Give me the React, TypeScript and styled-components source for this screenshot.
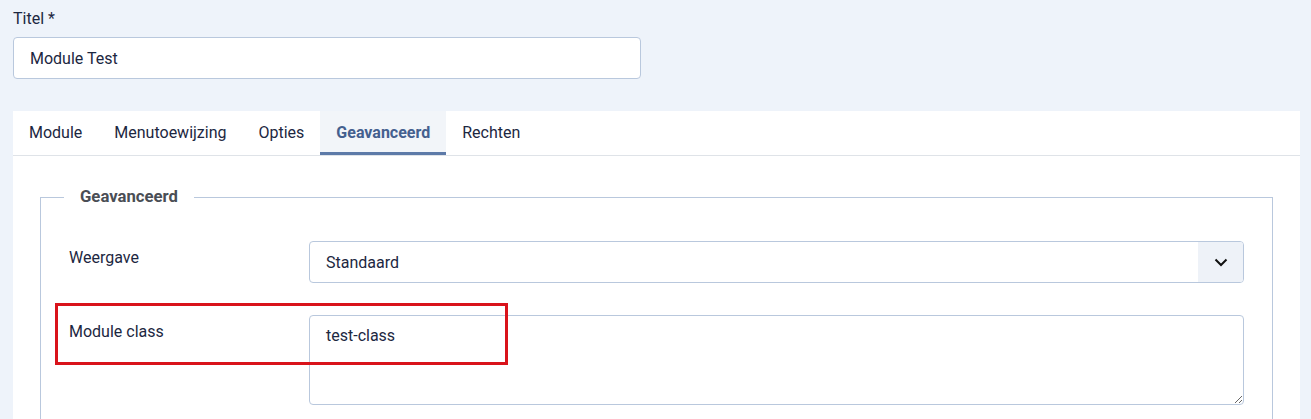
import styled, { createGlobalStyle } from "styled-components"

const GlobalStyle = createGlobalStyle`
    body {
        margin: 0;
        background-color: #eef3fa;
        font-family: Roboto, "Liberation Sans", sans-serif;
        font-size: 16px;
        color: #1c2741;
    }
`

const Page = styled.div`
    padding: 7px 11px 0 13px;
    height: 419px;
    box-sizing: border-box;
    overflow: hidden;
`

const TopLabel = styled.label`
    display: block;
    line-height: 24px;
    margin-bottom: 6px;
`

const TextInput = styled.input`
    display: block;
    box-sizing: border-box;
    width: 628px;
    height: 42px;
    padding: 0 16px;
    border: 1px solid #b9c8dd;
    border-radius: 4px;
    background: #fff;
    font-family: inherit;
    font-size: 16px;
    color: #1c2741;
    outline: none;
`

const Card = styled.div`
    margin-top: 32px;
    background: #fff;
`

const TabBar = styled.div`
    display: flex;
    border-bottom: 1px solid #dfe3e8;
`

const Tab = styled.div<{ $active?: boolean }>`
    box-sizing: border-box;
    height: 44px;
    padding: 1px 16px 0;
    display: flex;
    align-items: center;
    font-weight: ${p => (p.$active ? 700 : 400)};
    color: ${p => (p.$active ? "#44608f" : "#1c2741")};
    background: ${p => (p.$active ? "#f2f5f9" : "transparent")};
    border-bottom: 3px solid ${p => (p.$active ? "#5d7aa8" : "transparent")};
`

const CardBody = styled.div`
    padding: 29px 27px 30px;
`

const Fieldset = styled.fieldset`
    position: relative;
    margin: 0;
    padding: 32px 28px 30px;
    border: 1px solid #b9c8dd;
`

const Legend = styled.legend`
    margin-left: -5px;
    padding: 0 16px;
    font-weight: 700;
    font-size: 16.7px;
    line-height: 24px;
    color: #4a4e55;
`

const Row = styled.div`
    display: grid;
    grid-template-columns: 240px 1fr;
    margin-bottom: 32px;
`

const RowLabel = styled.label`
    padding-top: 5px;
    line-height: 24px;
`

const SelectBox = styled.div`
    display: flex;
    height: 42px;
    box-sizing: border-box;
    border: 1px solid #b9c8dd;
    border-radius: 4px;
    overflow: hidden;
`

const SelectValue = styled.div`
    flex: 1;
    display: flex;
    align-items: center;
    padding-left: 16px;
`

const Caret = styled.div`
    width: 45px;
    display: flex;
    align-items: center;
    justify-content: center;
    background: #eef2f8;
`

const TextArea = styled.textarea`
    display: block;
    box-sizing: border-box;
    width: 100%;
    height: 90px;
    padding: 8px 16px;
    border: 1px solid #b9c8dd;
    border-radius: 4px;
    font-family: inherit;
    font-size: 16px;
    line-height: 24px;
    color: #1c2741;
    resize: vertical;
    outline: none;
`

// annotation box drawn over the "Module class" row
const Highlight = styled.div`
    position: absolute;
    left: 14px;
    top: 94px;
    width: 453px;
    height: 62px;
    box-sizing: border-box;
    border: 3px solid #d9131b;
    pointer-events: none;
`

const tabs = ["Module", "Menutoewijzing", "Opties", "Geavanceerd", "Rechten"]

function App() {
    return <Page>
        <GlobalStyle />
        <TopLabel>Titel *</TopLabel>
        <TextInput defaultValue="Module Test" />
        <Card>
            <TabBar>
                {tabs.map(t => <Tab key={t} $active={t === "Geavanceerd"}>{t}</Tab>)}
            </TabBar>
            <CardBody>
                <Fieldset>
                    <Legend>Geavanceerd</Legend>
                    <Row>
                        <RowLabel>Weergave</RowLabel>
                        <SelectBox>
                            <SelectValue>Standaard</SelectValue>
                            <Caret>
                                <svg width="14" height="9" viewBox="0 0 14 9">
                                    <path d="M1.5 1.5 L7 7 L12.5 1.5" fill="none" stroke="#111" strokeWidth="2" />
                                </svg>
                            </Caret>
                        </SelectBox>
                    </Row>
                    <Row>
                        <RowLabel>Module class</RowLabel>
                        <TextArea defaultValue="test-class" />
                    </Row>
                    <Highlight />
                </Fieldset>
            </CardBody>
        </Card>
    </Page>
}

export default App
